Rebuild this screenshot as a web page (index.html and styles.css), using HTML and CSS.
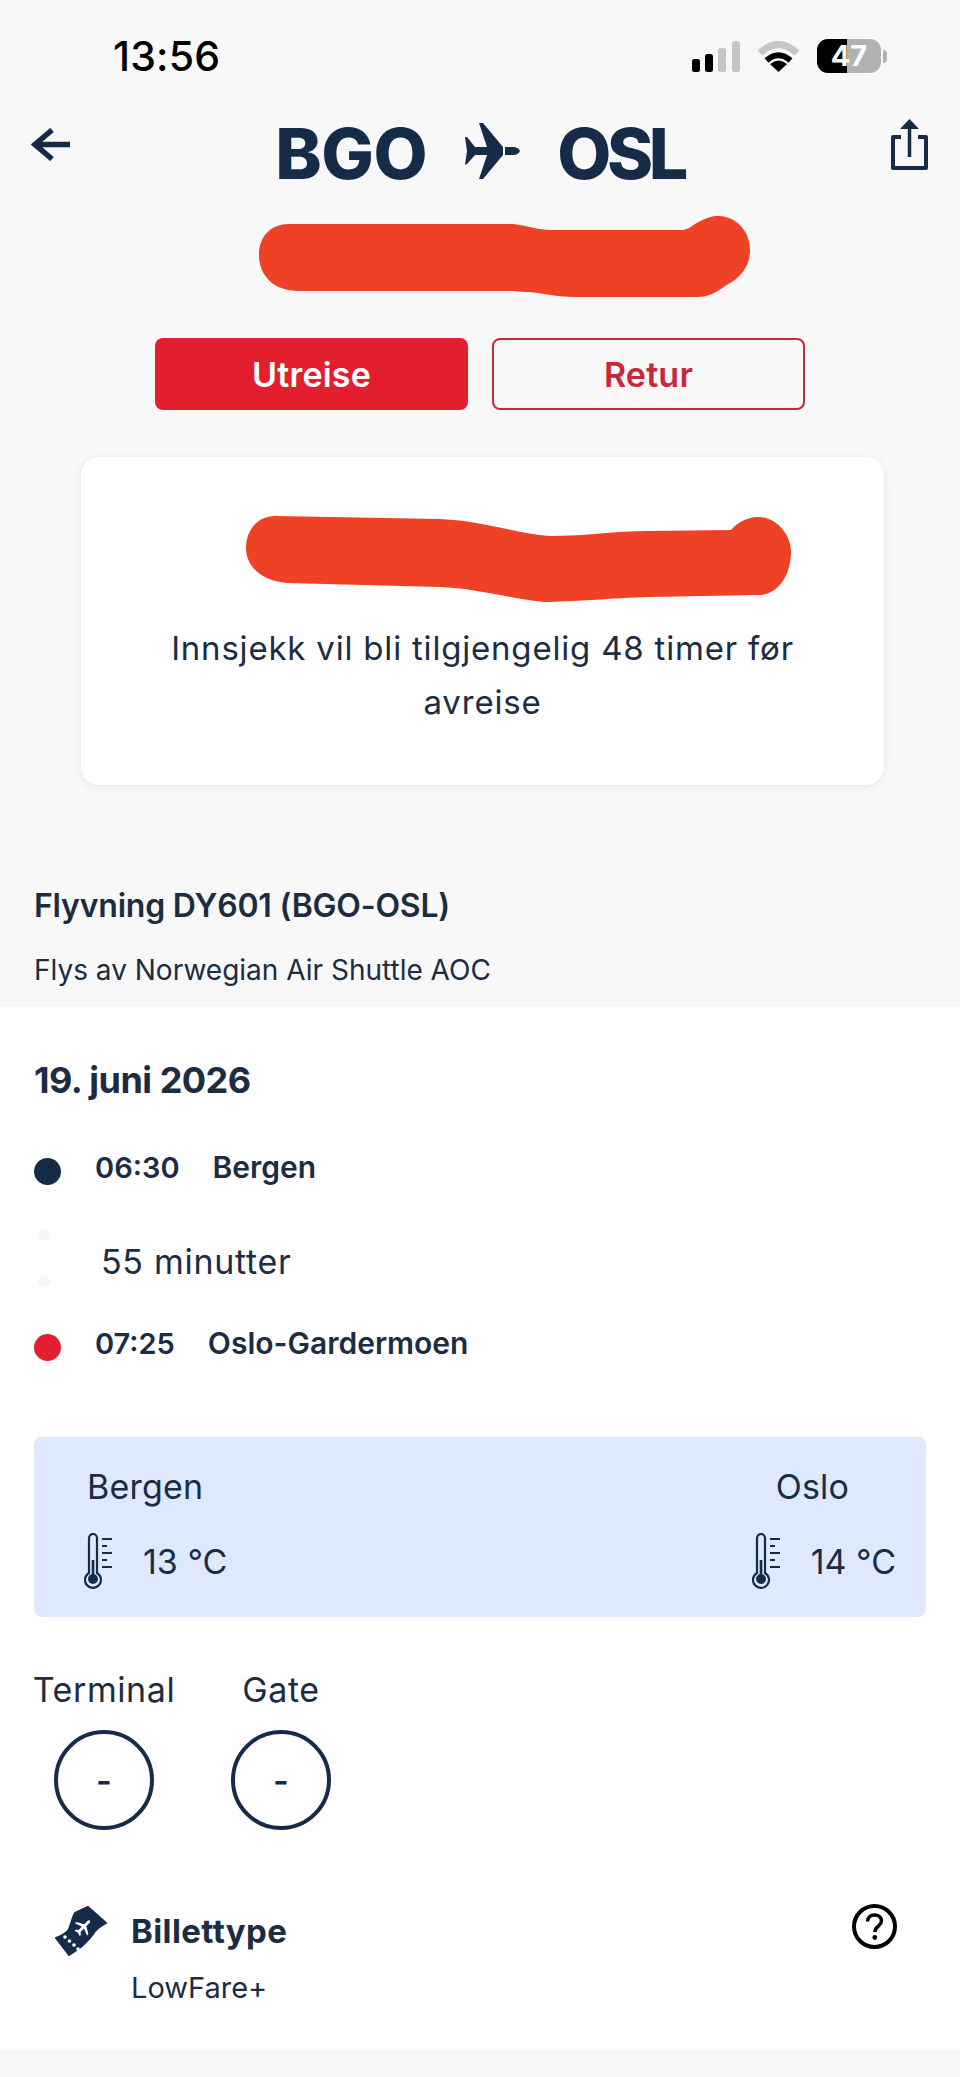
FILE: index.html
```html
<!DOCTYPE html>
<html lang="no">
<head>
<meta charset="utf-8">
<title>BGO – OSL</title>
<link rel="stylesheet" href="styles.css">
</head>
<body>
<div class="app">
  <section class="top">
    <div class="status">
      <span class="clock">13:56</span>
      <div class="status-icons">
        <svg class="signal" width="48" height="31" viewBox="0 0 48 31">
          <rect x="0" y="18" width="8" height="13" rx="2.5" fill="#000"/>
          <rect x="13" y="13" width="8" height="18" rx="2.5" fill="#000"/>
          <rect x="26" y="7" width="8" height="24" rx="2.5" fill="#c6c6c6"/>
          <rect x="40" y="0" width="8" height="31" rx="2.5" fill="#c6c6c6"/>
        </svg>
        <svg class="wifi" width="43" height="31" viewBox="0 0 43 31">
          <path d="M3 12Q21.5-5 40 12" fill="none" stroke="#c6c6c6" stroke-width="7"/>
          <path d="M9.5 19.5Q21.5 9 33.5 19.5" fill="none" stroke="#000" stroke-width="6"/>
          <path d="M21.5 31L13 23Q21.5 16 30 23Z" fill="#000"/>
        </svg>
        <div class="battery">
          <span class="battery-body">47</span>
          <span class="battery-cap"></span>
        </div>
      </div>
    </div>

    <header class="nav">
      <svg class="back" width="39" height="33" viewBox="0 0 39 33">
        <path d="M21 2L4 16.5L21 31M4 16.5H39" fill="none" stroke="#162b47" stroke-width="5.5"/>
      </svg>
      <h1 class="title">
        <span class="code-from">BGO</span>
        <svg class="plane" width="56" height="58" viewBox="0 0 56 58">
          <path d="M15 1L19 1L39 25V33L19 57H15L23 33H11L3 42L1 43L3 29L1 15L3 15L11 25H23Z" fill="#162b47"/>
          <path d="M41 25H49C53 25 55 27 56 29C55 31 53 33 49 33H41Z" fill="#162b47"/>
        </svg>
        <span class="code-to">OSL</span>
      </h1>
      <svg class="share" width="37" height="51" viewBox="0 0 37 51">
        <path d="M10 18H2V49H35V18H27" fill="none" stroke="#162b47" stroke-width="4" stroke-linejoin="round"/>
        <path d="M18.5 5V38" fill="none" stroke="#162b47" stroke-width="3.5"/>
        <path d="M18.5 0L28 10H9Z" fill="#162b47"/>
      </svg>
    </header>

    <svg class="redact-a" width="491" height="81" viewBox="0 0 491 81">
      <path d="M30 8H254C270 10 280 14 291 14H423C432 14 436 4 456 0C478-1 491 16 491 34C491 50 482 62 466 70C458 76 450 81 438 81H316C295 81 280 76 267 76C255 75 250 75 248 75H40C15 75 0 60 0 39C0 20 12 8 30 8Z" fill="#ef4125"/>
    </svg>

    <div class="tabs">
      <button class="tab tab-on">Utreise</button>
      <button class="tab tab-off">Retur</button>
    </div>

    <div class="card">
      <svg class="redact-b" width="545" height="86" viewBox="0 0 545 86">
        <path d="M29 0L194 3C240 5 270 18 304 20C340 20 370 15 402 15L485 14C490 8 500 1 512 1C530 1 545 18 545 36C545 55 535 79 512 79L402 81C370 82 320 86 298 86C270 84 230 72 194 71L41 67C15 65 0 50 0 32C0 14 12 0 29 0Z" fill="#ef4125"/>
      </svg>
      <p class="card-text">Innsjekk vil bli tilgjengelig 48 timer før avreise</p>
    </div>

    <div class="flight">
      <h2 class="flight-name">Flyvning DY601 (BGO-OSL)</h2>
      <p class="flight-op">Flys av Norwegian Air Shuttle AOC</p>
    </div>
  </section>

  <main class="detail">
    <h3 class="date">19. juni 2026</h3>

    <div class="stop stop-first">
      <span class="dot dot-navy"></span>
      <span class="stop-time">06:30</span>
      <span class="stop-place">Bergen</span>
    </div>
    <div class="leg">
      <div class="leg-dots"><span></span><span></span></div>
      <span class="leg-text">55 minutter</span>
    </div>
    <div class="stop">
      <span class="dot dot-red"></span>
      <span class="stop-time">07:25</span>
      <span class="stop-place">Oslo-Gardermoen</span>
    </div>

    <div class="weather">
      <div class="wx wx-left">
        <span class="wx-city">Bergen</span>
        <div class="wx-temp">
          <svg class="thermo" width="28" height="56" viewBox="0 0 28 56">
            <path d="M5 40V5a4 4 0 0 1 8 0V40a8 8 0 1 1-8 0Z" fill="none" stroke="#162b47" stroke-width="2.2"/>
            <circle cx="9" cy="46" r="5" fill="#162b47"/>
            <rect x="7.7" y="27" width="2.6" height="16" fill="#162b47"/>
            <path d="M18 6H28M18 13H23M18 20H28M18 27H23M18 34H28" stroke="#162b47" stroke-width="2"/>
          </svg>
          <span>13 °C</span>
        </div>
      </div>
      <div class="wx wx-right">
        <span class="wx-city">Oslo</span>
        <div class="wx-temp">
          <svg class="thermo" width="28" height="56" viewBox="0 0 28 56">
            <path d="M5 40V5a4 4 0 0 1 8 0V40a8 8 0 1 1-8 0Z" fill="none" stroke="#162b47" stroke-width="2.2"/>
            <circle cx="9" cy="46" r="5" fill="#162b47"/>
            <rect x="7.7" y="27" width="2.6" height="16" fill="#162b47"/>
            <path d="M18 6H28M18 13H23M18 20H28M18 27H23M18 34H28" stroke="#162b47" stroke-width="2"/>
          </svg>
          <span>14 °C</span>
        </div>
      </div>
    </div>

    <div class="gates">
      <div class="gate gate-terminal">
        <span class="gate-label">Terminal</span>
        <span class="gate-circle">-</span>
      </div>
      <div class="gate gate-gate">
        <span class="gate-label">Gate</span>
        <span class="gate-circle">-</span>
      </div>
    </div>

    <div class="fare">
      <svg class="ticket" width="52" height="50" viewBox="0 0 52 50">
        <path d="M33 1L51 17C44 21 40 24 38 28C34 34 30 37 27 40C23 43 19 46 14 49L1 32C6 30 10 28 13 25C16 20 17 12 20 7Z" fill="#162b47" stroke="#162b47" stroke-width="2" stroke-linejoin="round"/>
        <path d="M9 0C9 1 8 1.4 6 1.4H2.5L-1.5 8.5H-3.5L-.8 1.4H-5.5L-7.5 3.7H-9L-8 0L-9-3.7H-7.5L-5.5-1.4H-.8L-3.5-8.5H-1.5L2.5-1.4H6C8-1.4 9-1 9 0Z" fill="#fff" transform="translate(28.5 21) rotate(-45)"/>
        <g fill="#fff">
          <circle cx="10" cy="31" r="1.8"/>
          <circle cx="14.5" cy="35" r="1.8"/>
          <circle cx="19" cy="39" r="1.8"/>
          <circle cx="23" cy="43" r="1.8"/>
        </g>
      </svg>
      <div class="fare-text">
        <strong class="fare-title">Billettype</strong>
        <span class="fare-value">LowFare+</span>
      </div>
      <svg class="help" width="45" height="45" viewBox="0 0 45 45">
        <circle cx="22.5" cy="22.5" r="20.5" fill="none" stroke="#000" stroke-width="4"/>
        <path d="M15.5 17.5C15.5 13.5 18.5 11 22.5 11C26.5 11 29.5 13.5 29.5 17C29.5 22 23 22 23 28" fill="none" stroke="#000" stroke-width="3.5"/>
        <circle cx="22.8" cy="33.5" r="2.4" fill="#000"/>
      </svg>
    </div>
  </main>
</div>
</body>
</html>
```
FILE: styles.css
```css
* { box-sizing: border-box; }
html, body { margin: 0; padding: 0; }
body { background: #f7f7f7; font-family: "Inter", "Liberation Sans", sans-serif; color: #162b47; }
svg { display: block; flex: none; }
h1, h2, h3, p { margin: 0; }

.app { width: 960px; height: 2077px; overflow: hidden; background: #f7f7f7; }

.top { height: 1007px; padding-top: 39px; background: #f8f8f8; }

.status { display: flex; justify-content: space-between; align-items: center; height: 34px; padding: 0 73px 0 113px; }
.clock { font-size: 41px; font-weight: 500; color: #000; line-height: 34px; letter-spacing: .2px; }
.status-icons { display: flex; align-items: center; gap: 17px; }
.battery { display: flex; align-items: center; gap: 2px; width: 70px; height: 34px; }
.battery-body { width: 64px; height: 34px; border-radius: 11px; background: linear-gradient(90deg, #000 0, #000 30px, #b2b2b2 30px); color: #fff; font-size: 29px; font-weight: 700; line-height: 34px; text-align: center; }
.battery-cap { width: 4px; height: 13px; border-radius: 0 4px 4px 0; background: #b2b2b2; }

.nav { display: flex; justify-content: space-between; align-items: flex-start; height: 60px; margin-top: 46px; padding: 0 32px 0 31px; }
.back { margin-top: 9px; }
.title { display: flex; align-items: center; gap: 37px; height: 60px; margin: 5px 2px 0 0; font-size: 70px; font-weight: 800; line-height: 60px; color: #162b47; }
.code-from { letter-spacing: -.4px; }
.code-to { letter-spacing: -4.5px; }
.plane { margin-top: -7px; }

.redact-a { margin: 37px 0 0 259px; }

.tabs { display: flex; gap: 24px; margin-top: 41px; padding-left: 155px; }
.tab { width: 313px; height: 72px; padding: 0; border-radius: 8px; font-family: inherit; font-size: 34px; font-weight: 600; letter-spacing: .2px; }
.tab-on { background: #e31f2e; border: 0; color: #fff; }
.tab-off { background: #f8f8f8; border: 2px solid #c8283c; color: #c9283b; }

.card { width: 803px; height: 328px; margin: 47px 0 0 81px; padding: 59px 70px 0; background: #fff; border-radius: 18px; box-shadow: 0 2px 8px rgba(0,0,0,.08); }
.redact-b { margin-left: 95px; }
.card-text { margin-top: 19px; font-size: 33px; line-height: 54px; text-align: center; color: #1c2c42; letter-spacing: .8px; }

.flight { margin-top: 101px; padding-left: 34px; }
.flight-name { font-size: 32px; font-weight: 600; line-height: 40px; letter-spacing: -.2px; color: #1c2c42; }
.flight-op { margin-top: 24px; font-size: 28px; line-height: 40px; color: #1c2c42; }

.detail { height: 1043px; padding: 50px 34px 0; background: #fff; }
.date { font-size: 36px; font-weight: 700; line-height: 46px; color: #1c2c42; letter-spacing: -.5px; }

.stop { display: flex; align-items: center; height: 40px; color: #1c2c42; font-size: 29px; font-weight: 600; }
.stop-first { margin-top: 44px; }
.dot { width: 27px; height: 27px; margin: 9px 34px 0 0; border-radius: 50%; }
.dot-navy { background: #162b47; }
.dot-red { background: #e31f2e; }
.stop-place { margin-left: 33px; font-size: 30px; }

.leg { display: flex; align-items: center; height: 136px; }
.leg-dots { display: flex; flex-direction: column; gap: 34px; width: 67px; margin-top: 5px; padding-left: 4px; }
.leg-dots span { width: 12px; height: 12px; border-radius: 50%; background: #f6f6f6; }
.leg-text { margin-top: 12px; color: #1c2c42; font-size: 34px; letter-spacing: .7px; }

.weather { display: flex; justify-content: space-between; height: 180px; margin-top: 74px; padding: 28px 30px 0 50px; background: #dee9fd; border-radius: 8px; color: #1c2c42; }
.wx { display: flex; flex-direction: column; }
.wx-city { font-size: 34px; line-height: 44px; letter-spacing: .2px; }
.wx-left .wx-city { margin-left: 3px; }
.wx-right .wx-city { margin-left: 24px; }
.wx-temp { display: flex; align-items: center; gap: 31px; margin-top: 24px; font-size: 34px; }

.gates { display: flex; margin-top: 51px; }
.gate { display: flex; flex-direction: column; align-items: center; }
.gate-terminal { width: 140px; }
.gate-gate { width: 100px; margin-left: 57px; }
.gate-label { color: #1c2c42; font-size: 34px; line-height: 44px; letter-spacing: .6px; white-space: nowrap; }
.gate-circle { display: flex; align-items: center; justify-content: center; width: 100px; height: 100px; margin-top: 18px; border: 4px solid #162b47; border-radius: 50%; font-size: 34px; font-weight: 600; }

.fare { display: flex; align-items: flex-start; margin-top: 76px; padding-left: 21px; }
.fare-text { display: flex; flex-direction: column; flex: 1; margin: 3px 0 0 24px; }
.fare-title { color: #1c2c42; font-size: 33px; font-weight: 700; line-height: 44px; letter-spacing: .4px; }
.fare-value { margin-top: 15px; color: #1c2c42; font-size: 29px; line-height: 40px; }
.help { margin: -2px 29px 0 0; }
```
